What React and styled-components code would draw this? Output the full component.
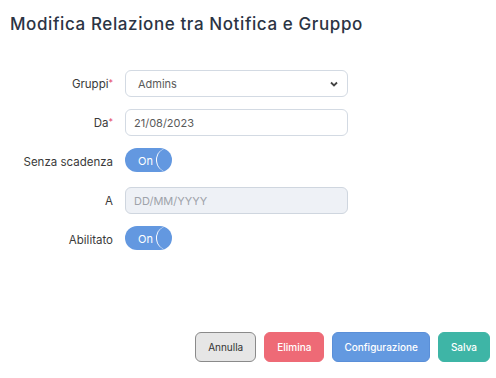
import React, { useState } from 'react';
import styled, { createGlobalStyle } from 'styled-components';

const GlobalStyle = createGlobalStyle`
  body {
    margin: 0;
    background: #fff;
    font-family: "Inter", "Noto Sans", sans-serif;
  }
`;

const Page = styled.div`
  width: 496px;
  height: 378px;
  box-sizing: border-box;
  padding: 14px 6px 16px 10px;
  display: flex;
  flex-direction: column;
`;

const Title = styled.h2`
  margin: 0;
  font-size: 17px;
  font-weight: 500;
  color: #2b3444;
  letter-spacing: 0.6px;
`;

const Form = styled.div`
  margin-top: 36px;
  display: flex;
  flex-direction: column;
  gap: 12px;
`;

const Row = styled.div`
  display: grid;
  grid-template-columns: 103px 223px;
  column-gap: 12px;
  align-items: ${p => (p.top ? 'start' : 'center')};
  min-height: 27px;
`;

const Label = styled.label`
  text-align: right;
  font-size: 11.5px;
  color: #3a3a3a;
  align-self: center;
`;

const Star = styled.span`
  color: #e3456b;
  font-size: 9px;
  vertical-align: top;
`;

const Field = styled.div`
  box-sizing: border-box;
  height: 27px;
  border: 1px solid ${p => (p.disabled ? '#cfd6df' : '#d3dae3')};
  border-radius: 6px;
  background: ${p => (p.disabled ? '#eef1f6' : '#fff')};
  display: flex;
  align-items: center;
  justify-content: space-between;
  padding: 0 8px 0 ${p => (p.select ? '12px' : '8px')};
  font-size: 11px;
  color: ${p => (p.placeholder ? '#9ea3aa' : '#5a5a5a')};
`;

const Toggle = styled.div`
  position: relative;
  width: 47px;
  height: 24px;
  border-radius: 12px;
  background: #6398e0;
  overflow: hidden;
  display: flex;
  align-items: center;
  padding: 2px 0 0 13px;
  box-sizing: border-box;
  color: #fff;
  font-size: 11px;
  cursor: pointer;
`;

const Knob = styled.span`
  position: absolute;
  right: -8px;
  top: 0;
  width: 24px;
  height: 24px;
  box-sizing: border-box;
  border-radius: 50%;
  border-left: 1.5px solid #fff;
`;

const Actions = styled.div`
  margin-top: auto;
  display: flex;
  justify-content: flex-end;
  gap: 8px;
`;

const Button = styled.button`
  height: 30px;
  padding: 0 ${p => p.pad || 12}px;
  border-radius: 6px;
  font-family: inherit;
  font-size: 10px;
  font-weight: ${p => (p.color ? 400 : 500)};
  border: 1px solid ${p => p.border || p.bg};
  background: ${p => p.bg};
  color: ${p => p.color || '#fff'};
`;

function Switch() {
  const [on, setOn] = useState(true);
  return (
    <Toggle onClick={() => setOn(!on)}>
      {on ? 'On' : 'Off'}
      <Knob />
    </Toggle>
  );
}

export default function App() {
  return (
    <Page>
      <GlobalStyle />
      <Title>Modifica Relazione tra Notifica e Gruppo</Title>
      <Form>
        <Row>
          <Label>Gruppi<Star>*</Star></Label>
          <Field select>
            Admins
            <svg width="10" height="10" viewBox="0 0 10 10">
              <path d="M2 3.5 L5 6.5 L8 3.5" stroke="#444" strokeWidth="1.8" fill="none" />
            </svg>
          </Field>
        </Row>
        <Row>
          <Label>Da<Star>*</Star></Label>
          <Field>21/08/2023</Field>
        </Row>
        <Row top>
          <Label>Senza scadenza</Label>
          <Switch />
        </Row>
        <Row>
          <Label>A</Label>
          <Field disabled placeholder>DD/MM/YYYY</Field>
        </Row>
        <Row top>
          <Label>Abilitato</Label>
          <Switch />
        </Row>
      </Form>
      <Actions>
        <Button bg="#e6e6e6" border="#8a8a8a" color="#333" pad={12}>Annulla</Button>
        <Button bg="#ee6a76">Elimina</Button>
        <Button bg="#6399e0" border="#5a8fd8" pad={11}>Configurazione</Button>
        <Button bg="#3eb5a6" pad={12}>Salva</Button>
      </Actions>
    </Page>
  );
}
